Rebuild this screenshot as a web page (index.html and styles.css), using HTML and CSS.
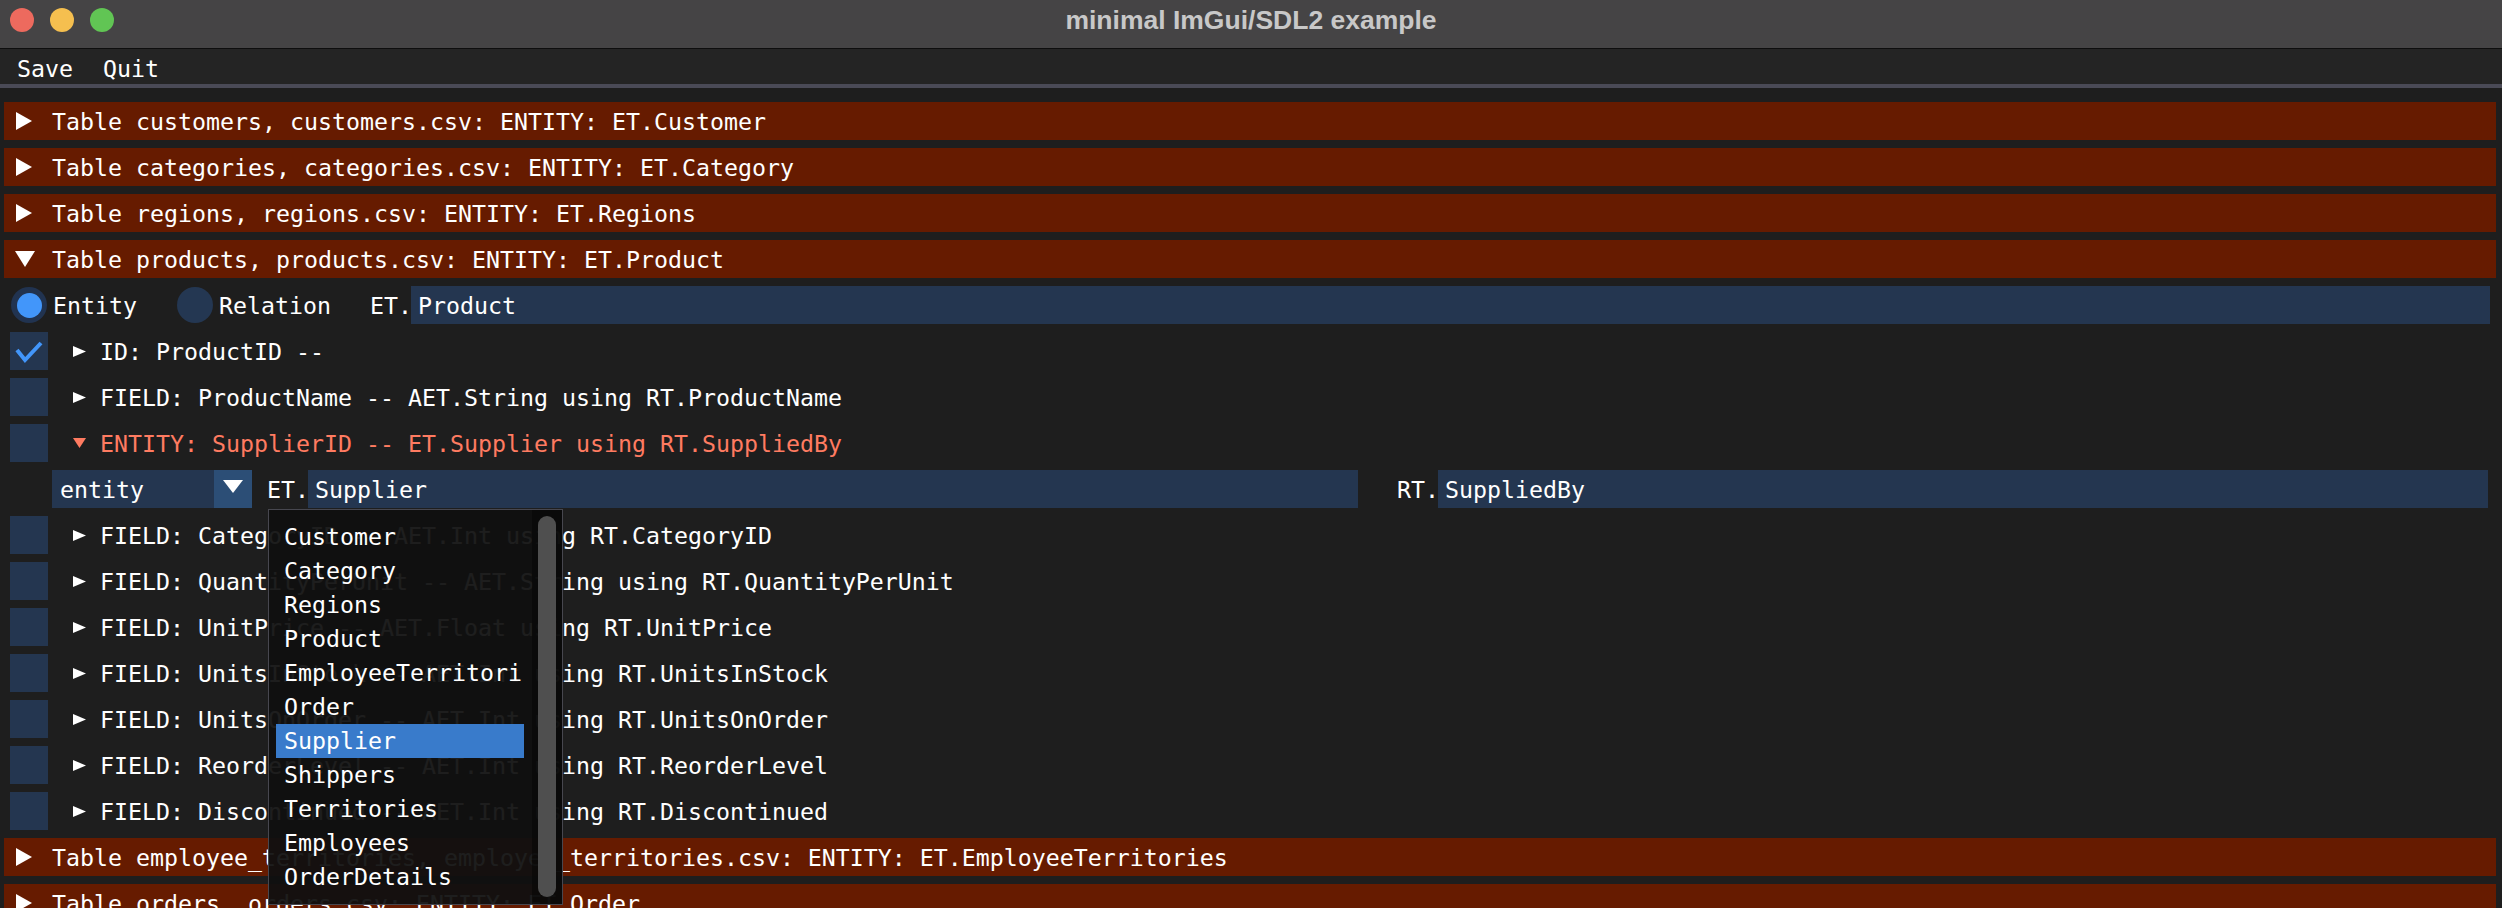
FILE: index.html
```html
<!DOCTYPE html>
<html>
<head>
<meta charset="utf-8">
<title>minimal ImGui/SDL2 example</title>
<link rel="stylesheet" href="styles.css">
</head>
<body>
<div class="window">
  <div class="titlebar">
    <div class="lights">
      <span class="light red"></span><span class="light yellow"></span><span class="light green"></span>
    </div>
    <div class="title">minimal ImGui/SDL2 example</div>
    <div></div>
  </div>
  <div class="menubar"><span class="menu">Save</span><span class="menu quit">Quit</span></div>
  <div class="sep"></div>

  <div class="content">
    <div class="hdr"><svg class="hdr-arrow" viewBox="0 0 16 18"><polygon points="0,0 16,9 0,18"/></svg><span class="hdr-text">Table customers, customers.csv: ENTITY: ET.Customer</span></div>
    <div class="hdr"><svg class="hdr-arrow" viewBox="0 0 16 18"><polygon points="0,0 16,9 0,18"/></svg><span class="hdr-text">Table categories, categories.csv: ENTITY: ET.Category</span></div>
    <div class="hdr"><svg class="hdr-arrow" viewBox="0 0 16 18"><polygon points="0,0 16,9 0,18"/></svg><span class="hdr-text">Table regions, regions.csv: ENTITY: ET.Regions</span></div>
    <div class="hdr open"><svg class="hdr-arrow down" viewBox="0 0 20 16"><polygon points="0,0 20,0 10,16"/></svg><span class="hdr-text">Table products, products.csv: ENTITY: ET.Product</span></div>

    <div class="row radio-row">
      <span class="radio"><span class="dot"></span></span><span class="rlabel">Entity</span>
      <span class="radio second"></span><span class="rlabel">Relation</span>
      <span class="prefix first">ET.</span><div class="input">Product</div>
    </div>

    <div class="row"><span class="checkbox"><svg viewBox="0 0 38 38"><polyline points="7,18 15,28 31,11"/></svg></span><svg class="tri" viewBox="0 0 13 11"><polygon points="0,0 13,5.5 0,11"/></svg><span class="ftext">ID: ProductID --</span></div>
    <div class="row"><span class="checkbox"></span><svg class="tri" viewBox="0 0 13 11"><polygon points="0,0 13,5.5 0,11"/></svg><span class="ftext">FIELD: ProductName -- AET.String using RT.ProductName</span></div>
    <div class="row"><span class="checkbox"></span><svg class="tri down" viewBox="0 0 13 10"><polygon points="0,0 13,0 6.5,10"/></svg><span class="ftext entity">ENTITY: SupplierID -- ET.Supplier using RT.SuppliedBy</span></div>

    <div class="row combo-row">
      <div class="combo"><span class="combo-val">entity</span><span class="combo-btn"><svg viewBox="0 0 20 13"><polygon points="0,0 20,0 10,13"/></svg></span></div>
      <span class="prefix">ET.</span><div class="input">Supplier</div>
      <span class="prefix rt">RT.</span><div class="input">SuppliedBy</div>
    </div>

    <div class="row"><span class="checkbox"></span><svg class="tri" viewBox="0 0 13 11"><polygon points="0,0 13,5.5 0,11"/></svg><span class="ftext">FIELD: CategoryID -- AET.Int using RT.CategoryID</span></div>
    <div class="row"><span class="checkbox"></span><svg class="tri" viewBox="0 0 13 11"><polygon points="0,0 13,5.5 0,11"/></svg><span class="ftext">FIELD: QuantityPerUnit -- AET.String using RT.QuantityPerUnit</span></div>
    <div class="row"><span class="checkbox"></span><svg class="tri" viewBox="0 0 13 11"><polygon points="0,0 13,5.5 0,11"/></svg><span class="ftext">FIELD: UnitPrice -- AET.Float using RT.UnitPrice</span></div>
    <div class="row"><span class="checkbox"></span><svg class="tri" viewBox="0 0 13 11"><polygon points="0,0 13,5.5 0,11"/></svg><span class="ftext">FIELD: UnitsInStock -- AET.Int using RT.UnitsInStock</span></div>
    <div class="row"><span class="checkbox"></span><svg class="tri" viewBox="0 0 13 11"><polygon points="0,0 13,5.5 0,11"/></svg><span class="ftext">FIELD: UnitsOnOrder -- AET.Int using RT.UnitsOnOrder</span></div>
    <div class="row"><span class="checkbox"></span><svg class="tri" viewBox="0 0 13 11"><polygon points="0,0 13,5.5 0,11"/></svg><span class="ftext">FIELD: ReorderLevel -- AET.Int using RT.ReorderLevel</span></div>
    <div class="row"><span class="checkbox"></span><svg class="tri" viewBox="0 0 13 11"><polygon points="0,0 13,5.5 0,11"/></svg><span class="ftext">FIELD: Discontinued -- AET.Int using RT.Discontinued</span></div>

    <div class="hdr"><svg class="hdr-arrow" viewBox="0 0 16 18"><polygon points="0,0 16,9 0,18"/></svg><span class="hdr-text">Table employee_territories, employee_territories.csv: ENTITY: ET.EmployeeTerritories</span></div>
    <div class="hdr"><svg class="hdr-arrow" viewBox="0 0 16 18"><polygon points="0,0 16,9 0,18"/></svg><span class="hdr-text">Table orders, orders.csv: ENTITY: ET.Order</span></div>
  </div>

  <div class="popup">
    <div class="popup-list">
      <div class="item"><span class="item-text">Customer</span></div>
      <div class="item"><span class="item-text">Category</span></div>
      <div class="item"><span class="item-text">Regions</span></div>
      <div class="item"><span class="item-text">Product</span></div>
      <div class="item"><span class="item-text">EmployeeTerritories</span></div>
      <div class="item"><span class="item-text">Order</span></div>
      <div class="item selected"><span class="item-text">Supplier</span></div>
      <div class="item"><span class="item-text">Shippers</span></div>
      <div class="item"><span class="item-text">Territories</span></div>
      <div class="item"><span class="item-text">Employees</span></div>
      <div class="item"><span class="item-text">OrderDetails</span></div>
    </div>
    <div class="scrollbar"><div class="grab"></div></div>
  </div>
</div>
</body>
</html>
```

FILE: styles.css
```css
html, body {
  margin: 0;
  padding: 0;
  background: #1e1e1e;
  overflow: hidden;
}

.window {
  position: relative;
  width: 2502px;
  height: 908px;
  overflow: hidden;
  background: #1e1e1e;
  color: #ffffff;
  font-family: "DejaVu Sans Mono", "Liberation Mono", monospace;
  font-size: 23.25px;
  line-height: 26px;
  white-space: nowrap;
}

/* ---------- title bar ---------- */
.titlebar {
  height: 48px;
  background: #454445;
  border-bottom: 1px solid #0e0e0e;
  display: grid;
  grid-template-columns: 1fr auto 1fr;
  align-items: start;
}
.lights {
  display: flex;
  gap: 16px;
  padding: 8px 0 0 10px;
}
.light {
  width: 24px;
  height: 24px;
  border-radius: 50%;
}
.light.red { background: #ed6a5e; }
.light.yellow { background: #f5bf4f; }
.light.green { background: #61c554; }
.title {
  font-family: "Liberation Sans", Arial, sans-serif;
  font-weight: bold;
  font-size: 26.5px;
  line-height: 30px;
  color: #c8c8c8;
  margin-top: 5px;
}

/* ---------- menu bar ---------- */
.menubar {
  height: 35px;
  background: #242424;
  display: flex;
  padding-left: 17px;
}
.menu {
  padding-top: 7px;
}
.menu.quit {
  margin-left: 30px;
}
.sep {
  height: 4px;
  background: #4a4a56;
}

/* ---------- content ---------- */
.content {
  padding-top: 14px;
}

.hdr {
  display: flex;
  align-items: flex-start;
  height: 38px;
  margin: 0 6px 8px 4px;
  padding-left: 12px;
  background: #661b00;
}
.hdr-arrow {
  flex: none;
  width: 16px;
  height: 18px;
  margin-top: 10px;
  fill: #ffffff;
}
.hdr-arrow.down {
  width: 20px;
  height: 16px;
  margin-top: 11px;
  margin-left: -1px;
}
.hdr-text {
  margin-left: 20px;
  padding-top: 7px;
}
.hdr.open .hdr-text {
  margin-left: 17px;
}

.row {
  display: flex;
  align-items: flex-start;
  height: 38px;
  margin-bottom: 8px;
}

/* radio row */
.radio-row {
  padding-right: 12px;
}
.radio {
  flex: none;
  width: 36px;
  height: 36px;
  margin: 1px 0 0 11px;
  border-radius: 50%;
  background: #213350;
  display: flex;
  align-items: center;
  justify-content: center;
}
.radio.second {
  margin-left: 40px;
  background: #243752;
}
.dot {
  width: 25px;
  height: 25px;
  border-radius: 50%;
  background: #4296fa;
}
.rlabel {
  margin-left: 6px;
  padding-top: 7px;
}

.prefix {
  flex: none;
  width: 41px;
  padding-top: 7px;
  margin-left: 15px;
  overflow: visible;
}
.prefix.first {
  margin-left: 39px;
}
.prefix.rt {
  margin-left: 39px;
}
.input {
  flex: 1;
  height: 38px;
  background: #243650;
  padding: 7px 0 0 7px;
  box-sizing: border-box;
  overflow: hidden;
}

/* checkbox rows */
.checkbox {
  flex: none;
  width: 38px;
  height: 38px;
  margin-left: 10px;
  background: #243650;
}
.checkbox svg {
  display: block;
  width: 38px;
  height: 38px;
  fill: none;
  stroke: #4296fa;
  stroke-width: 4;
}
.tri {
  flex: none;
  width: 13px;
  height: 11px;
  margin: 14px 0 0 25px;
  fill: #ffffff;
}
.tri.down {
  height: 10px;
  fill: #ff7b61;
}
.ftext {
  margin-left: 14px;
  padding-top: 7px;
}
.ftext.entity {
  color: #ff7b61;
}

/* combo row */
.combo-row {
  padding-right: 14px;
}
.combo {
  flex: none;
  display: flex;
  width: 200px;
  height: 38px;
  margin-left: 52px;
}
.combo-val {
  flex: 1;
  background: #243650;
  padding: 7px 0 0 8px;
}
.combo-btn {
  flex: none;
  width: 38px;
  height: 38px;
  background: #2c4e76;
}
.combo-btn svg {
  display: block;
  width: 20px;
  height: 13px;
  margin: 10px 0 0 9px;
  fill: #ffffff;
}

/* ---------- popup ---------- */
.popup {
  position: absolute;
  left: 268px;
  top: 509px;
  width: 295px;
  height: 396px;
  box-sizing: border-box;
  border: 1px solid #47474f;
  background: rgba(16, 16, 16, 0.94);
}
.popup-list {
  padding: 10px 0 0 7px;
}
.item {
  width: 248px;
  height: 34px;
  box-sizing: border-box;
  padding: 4px 0 0 8px;
  overflow: hidden;
}
.item-text {
  display: block;
  max-width: 238px;
  overflow: hidden;
}
.item.selected {
  background: #397bcb;
}
.scrollbar {
  position: absolute;
  top: 0;
  right: 0;
  bottom: 0;
  width: 30px;
  background: rgba(5, 5, 5, 0.55);
}
.grab {
  position: absolute;
  top: 6px;
  left: 6px;
  width: 18px;
  height: 381px;
  border-radius: 9px;
  background: #4f4f4f;
}
```
